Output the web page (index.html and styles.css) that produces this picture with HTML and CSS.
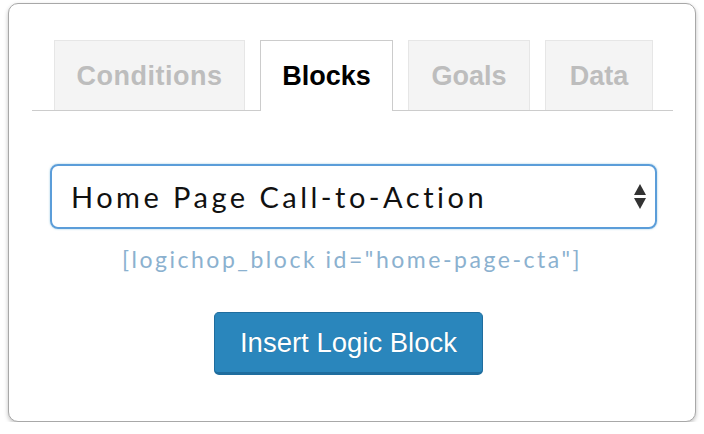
FILE: index.html
```html
<!DOCTYPE html>
<html lang="en">
<head>
    <meta charset="UTF-8">
    <title>Logic Hop - Insert Block</title>
    <link rel="stylesheet" href="styles.css">
</head>
<body>
    <div class="panel">
        <div class="tabs">
            <div class="tab tab-conditions">Conditions</div>
            <div class="tab tab-blocks active">Blocks</div>
            <div class="tab tab-goals">Goals</div>
            <div class="tab tab-data">Data</div>
        </div>

        <div class="select-box">
            <span class="select-text">Home Page Call-to-Action</span>
            <svg class="select-arrows" width="14" height="26" viewBox="0 0 14 26">
                <polygon points="7,0 13,11 1,11" fill="#333"/>
                <polygon points="1,14 13,14 7,25" fill="#333"/>
            </svg>
        </div>

        <div class="shortcode">[logichop_block id="home-page-cta"]</div>

        <div class="actions">
            <button class="insert-btn">Insert Logic Block</button>
        </div>
    </div>
</body>
</html>
```

FILE: styles.css
```css
body {
    margin: 0;
    background-color: #ffffff;
    font-family: "Liberation Sans", Arial, sans-serif;
}
.panel {
    box-sizing: border-box;
    width: 688px;
    height: 419px;
    margin: 3px 8px 0 8px;
    padding-top: 36px;
    border: 1px solid #a8a8a8;
    border-radius: 10px;
    background-color: #ffffff;
    box-shadow: 0 2px 4px rgba(0, 0, 0, 0.25);
}
.tabs {
    display: flex;
    align-items: flex-start;
    gap: 15px;
    margin: 0 22px 0 23px;
    padding-left: 22px;
    border-bottom: 1px solid #cccccc;
}
.tab {
    box-sizing: border-box;
    height: 70px;
    line-height: 70px;
    text-align: center;
    font-size: 27px;
    font-weight: bold;
    color: #bdbdbd;
    background-color: #f4f4f4;
    border: 1px solid #e6e6e6;
    border-bottom: none;
}
.tab-conditions { width: 191px; letter-spacing: 0.5px; }
.tab-blocks { width: 133px; }
.tab-goals { width: 122px; }
.tab-data { width: 108px; }
.tab.active {
    height: 71px;
    margin-bottom: -1px;
    color: #000000;
    background-color: #ffffff;
    border-color: #cccccc;
}
.select-box {
    box-sizing: border-box;
    display: flex;
    align-items: center;
    justify-content: space-between;
    height: 65px;
    margin: 53px 38px 0 41px;
    padding: 0 8px 0 19px;
    border: 2px solid #5b9dd9;
    border-radius: 8px;
    box-shadow: 0 0 2px rgba(30, 140, 190, 0.5);
}
.select-text {
    font-family: Lato, "Noto Sans", sans-serif;
    font-size: 29px;
    letter-spacing: 0.12em;
    color: #111111;
}
.shortcode {
    margin-top: 17px;
    line-height: 26px;
    text-align: center;
    font-family: Lato, "Noto Sans", sans-serif;
    font-size: 23px;
    letter-spacing: 0.11em;
    color: #8bb1cf;
}
.actions {
    display: flex;
    justify-content: center;
    margin-top: 40px;
    padding-right: 7px;
}
.insert-btn {
    box-sizing: border-box;
    width: 269px;
    height: 63px;
    padding: 0;
    font-family: "Liberation Sans", Arial, sans-serif;
    font-size: 27.5px;
    color: #ffffff;
    background-color: #2a86bc;
    border: 1px solid #1f6d9e;
    border-bottom-width: 3px;
    border-radius: 5px;
    text-shadow: 0 0 1px rgba(0, 0, 0, 0.2);
    cursor: pointer;
}
```
